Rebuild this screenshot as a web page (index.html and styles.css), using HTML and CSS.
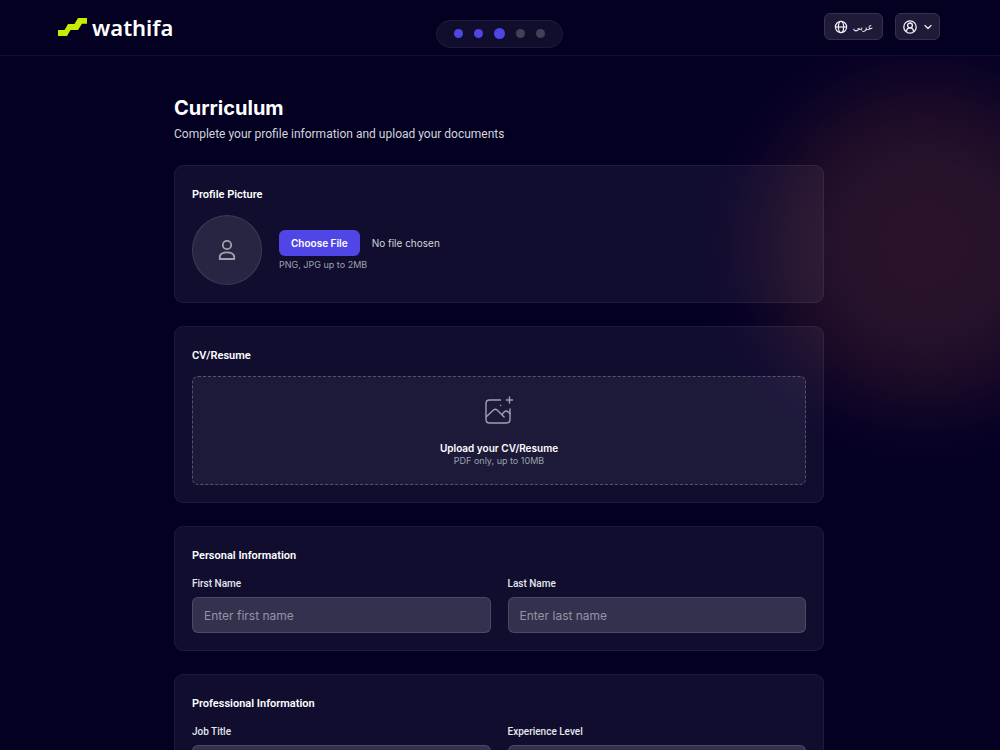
FILE: index.html
```html
<!DOCTYPE html>
<html lang="en">
<head>
    <meta charset="UTF-8">
    <meta name="viewport" content="width=device-width, initial-scale=1.0">
    <title>Wathifa - Curriculum</title>
    <link rel="stylesheet" href="styles.css">
</head>
<body>
    <header class="topbar">
        <a class="logo" href="#">
            <svg width="29" height="18" viewBox="0 0 29 18" aria-hidden="true">
                <path fill="#c8ec00" d="M0 12h6.500L10 6h6.500L20 0h9v5.700h-5L20 12h-7.500L9 18H0z"/>
            </svg>
            <span>wathifa</span>
        </a>

        <div class="steps">
            <span class="dot done"></span>
            <span class="dot done"></span>
            <span class="dot current"></span>
            <span class="dot"></span>
            <span class="dot"></span>
        </div>

        <div class="actions">
            <button class="nav-btn" type="button">
                <svg width="14" height="14" viewBox="0 0 14 14" fill="none" stroke="currentColor" stroke-width="1.2" aria-hidden="true">
                    <circle cx="7" cy="7" r="5.6"/>
                    <ellipse cx="7" cy="7" rx="2.6" ry="5.6"/>
                    <path d="M1.4 7h11.2"/>
                </svg>
                <span class="arabic" lang="ar">عربي</span>
            </button>
            <button class="nav-btn user-btn" type="button" aria-label="Account">
                <svg width="14" height="14" viewBox="0 0 14 14" fill="none" stroke="currentColor" stroke-width="1.3" aria-hidden="true">
                    <circle cx="7" cy="7" r="6.2"/>
                    <circle cx="7" cy="5.4" r="2.4"/>
                    <path d="M3.6 11.8V11c0-1.900 1.400-3.200 3.400-3.200s3.400 1.300 3.400 3.200v.8"/>
                </svg>
                <svg width="8" height="8" viewBox="0 0 8 8" fill="none" stroke="currentColor" stroke-width="1.2" stroke-linecap="round" stroke-linejoin="round" aria-hidden="true">
                    <path d="M1 2.500l3 3 3-3"/>
                </svg>
            </button>
        </div>
    </header>

    <main class="container">
        <h1>Curriculum</h1>
        <p class="subtitle">Complete your profile information and upload your documents</p>

        <form class="cards">
            <section class="card">
                <h2>Profile Picture</h2>
                <div class="profile">
                    <div class="avatar">
                        <svg width="18" height="22" viewBox="0 0 18 22" fill="none" stroke="currentColor" stroke-width="1.8" stroke-linejoin="round" aria-hidden="true">
                            <circle cx="9" cy="6" r="4.200"/>
                            <path d="M1.700 20v-1.400c0-3.200 2.800-5.200 7.300-5.200s7.300 2 7.300 5.200V20z"/>
                        </svg>
                    </div>
                    <div class="profile-file">
                        <input type="file" class="file-input" accept="image/png, image/jpeg" aria-label="Profile Picture">
                        <p class="hint">PNG, JPG up to 2MB</p>
                    </div>
                </div>
            </section>

            <section class="card">
                <h2>CV/Resume</h2>
                <label class="upload">
                    <input type="file" class="visually-hidden" accept="application/pdf">
                    <svg width="30" height="30" viewBox="0 0 30 30" fill="none" stroke="currentColor" stroke-width="1.400" stroke-linecap="round" stroke-linejoin="round" aria-hidden="true">
                        <path d="M16.500 4H5.500C3.500 4 2 5.500 2 7.500v16C2 25.500 3.500 27 5.500 27h17c2 0 3.500-1.500 3.500-3.500V13"/>
                        <path d="M25.500 1v6M22.500 4h6"/>
                        <path d="M2.500 20.500l7-6.400c1.200-1 2.500-1 3.600 0l7 6.900"/>
                        <path d="M18 18.500l2.200-2.600c1.300-1.300 2.800-1.200 4 0l1.800 1.900"/>
                        <path d="M16.500 9.500h.1"/>
                    </svg>
                    <span class="upload-title">Upload your CV/Resume</span>
                    <span class="hint">PDF only, up to 10MB</span>
                </label>
            </section>

            <section class="card">
                <h2>Personal Information</h2>
                <div class="fields">
                    <div class="field">
                        <label for="first-name">First Name</label>
                        <input type="text" id="first-name" placeholder="Enter first name">
                    </div>
                    <div class="field">
                        <label for="last-name">Last Name</label>
                        <input type="text" id="last-name" placeholder="Enter last name">
                    </div>
                </div>
            </section>

            <section class="card">
                <h2>Professional Information</h2>
                <div class="fields">
                    <div class="field">
                        <label for="job-title">Job Title</label>
                        <input type="text" id="job-title">
                    </div>
                    <div class="field">
                        <label for="experience">Experience Level</label>
                        <select id="experience"></select>
                    </div>
                </div>
            </section>
        </form>
    </main>
</body>
</html>
```

FILE: styles.css
```css
* {
    box-sizing: border-box;
}
html {
    scrollbar-width: none;
}
body {
    margin: 0;
    min-height: 100vh;
    font-family: Inter, "Liberation Sans", sans-serif;
    color: white;
    background: radial-gradient(circle 235px at calc(100% - 75px) 245px, #29132a 0%, #26122a 35%, #1d0c28 55%, #100526 72%, #060125 88%, #030022 100%) #030022;
}
h1, h2, p {
    margin: 0;
}
button, input, select {
    font-family: inherit;
}

/* Header */
.topbar {
    display: grid;
    grid-template-columns: 1fr auto 1fr;
    align-items: center;
    height: 56px;
    padding: 0 60px 2px 58px;
    background: #030022;
    border-bottom: 1px solid #140f36;
}
.logo {
    display: flex;
    align-items: center;
    gap: 5px;
    color: white;
    font-family: "Noto Sans", sans-serif;
    font-size: 22px;
    font-weight: 600;
    line-height: 28px;
    text-decoration: none;
}
.steps {
    display: flex;
    align-items: center;
    gap: 11px;
    height: 28px;
    margin-top: 14px;
    padding: 0 17px;
    background: #110d2d;
    border: 1px solid #1f1b3a;
    border-radius: 14px;
}
.dot {
    width: 9px;
    height: 9px;
    border-radius: 50%;
    background: #433f57;
}
.dot.done {
    background: #4f46e5;
}
.dot.current {
    width: 11px;
    height: 11px;
    background: #4f46e5;
}
.actions {
    display: flex;
    justify-content: flex-end;
    gap: 12px;
}
.nav-btn {
    display: flex;
    align-items: center;
    gap: 5px;
    height: 27px;
    padding: 0 9px;
    background: #1e1a38;
    border: 1px solid #35314b;
    border-radius: 6px;
    color: #f0f0f5;
    cursor: pointer;
}
.user-btn {
    gap: 7px;
    padding: 0 7px;
}
.arabic {
    font-family: "DejaVu Sans", sans-serif;
    font-size: 9px;
}

/* Page */
.container {
    width: 65%;
    margin-left: 17.4%;
    padding: 36px 0;
}
h1 {
    font-size: 20px;
    font-weight: 700;
    line-height: 32px;
}
.subtitle {
    margin-bottom: 21px;
    font-family: Roboto, sans-serif;
    font-size: 12px;
    line-height: 20px;
    color: #d1d5db;
}
.cards {
    display: flex;
    flex-direction: column;
    gap: 23px;
}
.card {
    padding: 17px;
    background: rgba(255, 240, 255, 0.055);
    border: 1px solid rgba(255, 255, 255, 0.06);
    border-radius: 9px;
}
h2 {
    margin-bottom: 8px;
    font-family: Roboto, sans-serif;
    font-size: 11px;
    font-weight: 600;
    line-height: 24px;
}
.hint {
    font-size: 9px;
    line-height: 12px;
    color: #9ca3af;
}

/* Profile picture */
.profile {
    display: flex;
    align-items: center;
    gap: 17px;
}
.avatar {
    display: flex;
    align-items: center;
    justify-content: center;
    width: 70px;
    height: 70px;
    background: rgba(255, 255, 255, 0.1);
    border: 1px solid rgba(255, 255, 255, 0.1);
    border-radius: 50%;
    color: #9ca3af;
}
.profile-file {
    display: flex;
    flex-direction: column;
    gap: 3px;
}
.file-input {
    font-size: 10px;
    color: #d1d5db;
}
.file-input::file-selector-button {
    height: 26px;
    margin: 0 12px 0 0;
    padding: 0 12px;
    background: #4f46e5;
    border: none;
    border-radius: 6px;
    color: white;
    font-family: inherit;
    font-size: 10px;
    font-weight: 600;
    cursor: pointer;
}

/* CV upload */
.upload {
    display: flex;
    flex-direction: column;
    align-items: center;
    padding: 19px 0 17px;
    background: rgba(255, 255, 255, 0.055);
    border: 1px dashed rgba(255, 255, 255, 0.25);
    border-radius: 6px;
    color: #9ca3af;
    cursor: pointer;
}
.upload-title {
    margin-top: 15px;
    font-size: 10px;
    font-weight: 600;
    line-height: 14px;
    color: white;
}
.visually-hidden {
    position: absolute;
    width: 1px;
    height: 1px;
    opacity: 0;
}

/* Form fields */
.fields {
    display: grid;
    grid-template-columns: 1fr 1fr;
    gap: 17px;
}
.field {
    display: flex;
    flex-direction: column;
    gap: 5px;
}
.field label {
    font-family: Roboto, sans-serif;
    font-size: 10px;
    font-weight: 500;
    line-height: 16px;
    color: #e5e7eb;
}
.field input,
.field select {
    width: 100%;
    height: 36px;
    padding: 0 11px;
    background: rgba(255, 255, 255, 0.15);
    border: 1px solid rgba(255, 255, 255, 0.12);
    border-radius: 6px;
    color: white;
    font-size: 12px;
    appearance: none;
}
.field input::placeholder {
    color: #9294a5;
}
```
